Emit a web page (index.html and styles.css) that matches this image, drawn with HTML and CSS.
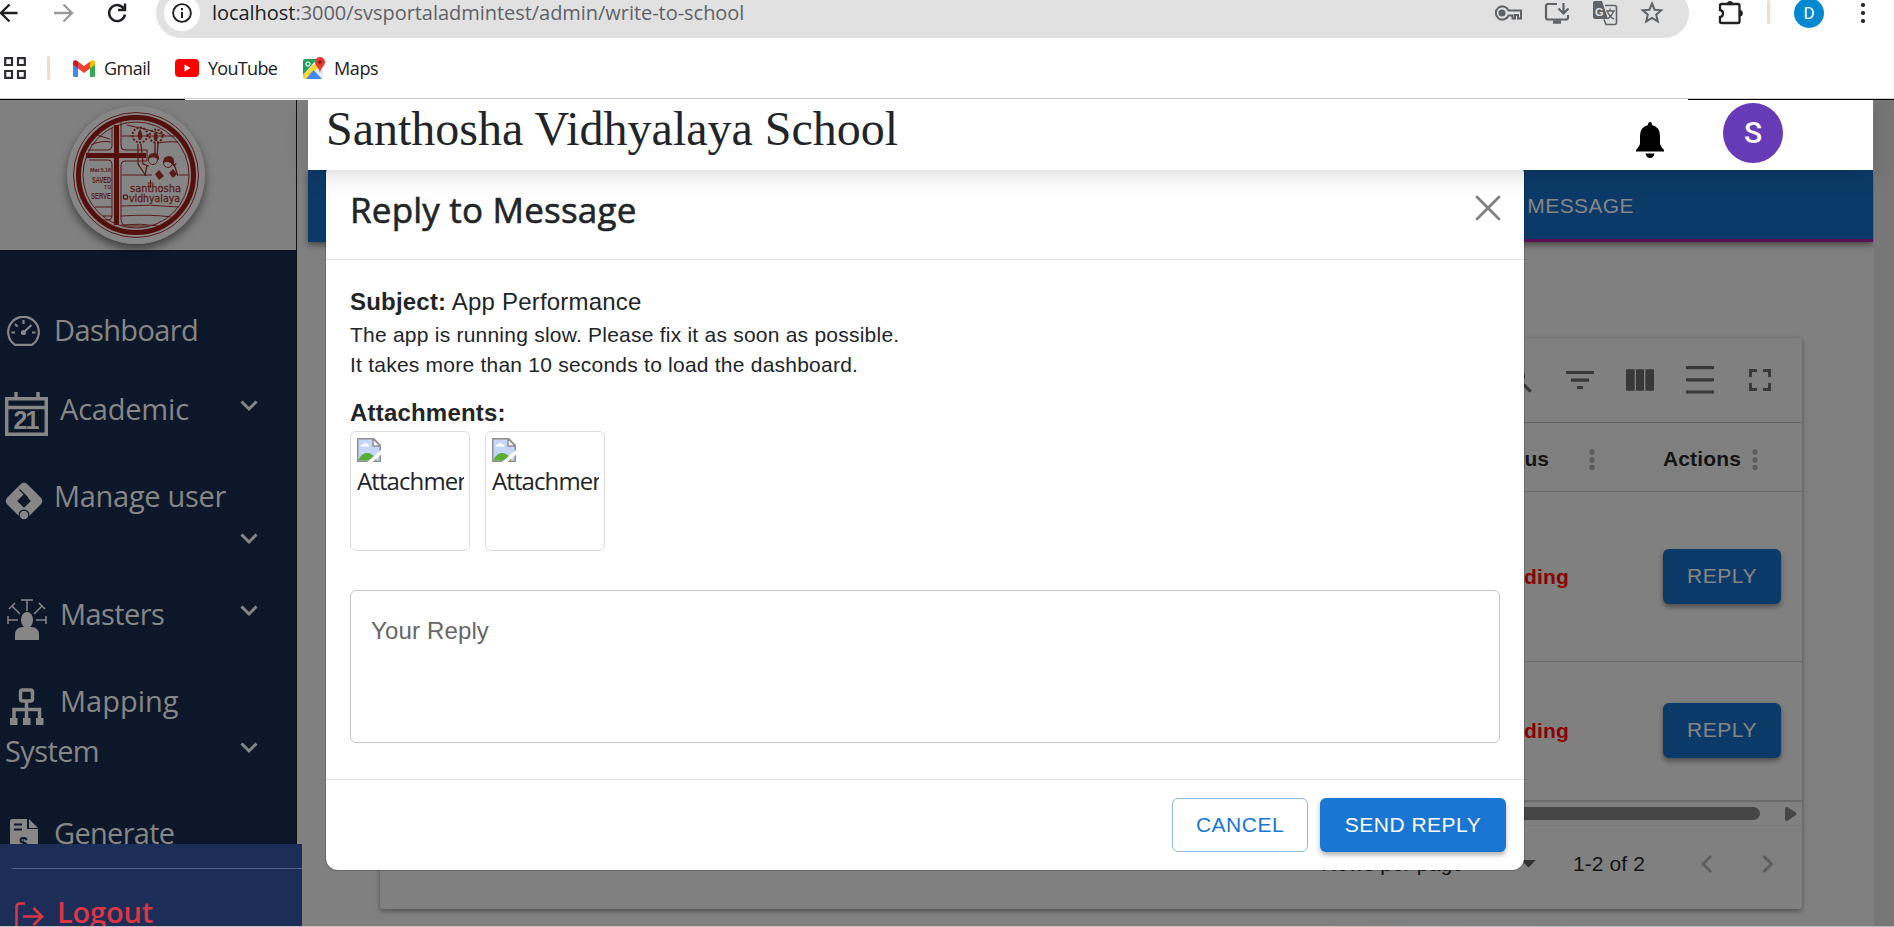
FILE: index.html
```html
<!DOCTYPE html>
<html lang="en">
<head>
<meta charset="utf-8">
<title>Santhosha Vidhyalaya School</title>
<link rel="stylesheet" href="styles.css">
</head>
<body>
<svg width="0" height="0" class="defs">
  <defs>
    <symbol id="chev" viewBox="0 0 18 12"><path d="M1.500 1.500 9 9l7.500-7.500" fill="none" stroke="#868686" stroke-width="3"/></symbol>
    <symbol id="broken" viewBox="0 0 24 24">
      <path d="M.75.75h16l6.500 6.500v16H.75z" fill="#c6d6f8" stroke="#8f8f8f" stroke-width="1.500"/>
      <path d="M3.500 8.500c0-2 2-2.300 2.700-2 .5-2.500 4-2.500 4.500 0 1.700 0 2 2 1 2z" fill="#fff"/>
      <path d="M1.500 22.500c3-10 14-10 18 0z" fill="#5aae38"/>
      <path d="M16 .75V8h7.250z" fill="#fff" stroke="#8f8f8f" stroke-width="1.500"/>
      <path d="M10 24 24 12v4.500L15.500 24z" fill="#fff"/>
    </symbol>
    <symbol id="kebab" viewBox="0 0 6 22"><g fill="#5c5c5c"><circle cx="3" cy="3" r="2.700"/><circle cx="3" cy="11" r="2.700"/><circle cx="3" cy="18.500" r="2.700"/></g></symbol>
  </defs>
</svg>

<header class="browser">
  <div class="toolbar">
    <svg class="back" width="18" height="22" viewBox="0 0 18 22"><path d="M17.500 11H1M9.500 2.500 1 11l8.500 8.500" fill="none" stroke="#202124" stroke-width="2.300"/></svg>
    <svg class="forward" width="20" height="22" viewBox="0 0 20 22"><path d="M0 11h17M9.500 2.500 18 11l-8.500 8.500" fill="none" stroke="#9a9a9a" stroke-width="2.300"/></svg>
    <svg class="reload" width="22" height="24" viewBox="0 0 22 24"><path d="M18.300 8.500A8 8 0 1 0 19 13.500M19 2.500V9h-7" fill="none" stroke="#202124" stroke-width="2.500"/></svg>
    <div class="omnibox">
      <span class="site-info"><svg width="20" height="20" viewBox="0 0 20 20"><circle cx="10" cy="10" r="8.900" fill="none" stroke="#202124" stroke-width="1.900"/><path d="M10 9v6M10 5v2.300" stroke="#202124" stroke-width="2"/></svg></span>
      <span class="url"><b>localhost</b>:3000/svsportaladmintest/admin/write-to-school</span>
      <span class="omni-icons">
        <svg width="28" height="26" viewBox="0 0 28 26" fill="none" stroke="#5f6368" stroke-width="2"><path d="M14.500 10.500H27v8h-3v-3.500h-3v3.500h-2.500V15.500h-4A6.600 6.600 0 1 1 14.500 10.500z"/><circle cx="8" cy="13" r="2.600" fill="#5f6368"/></svg>
        <svg width="26" height="26" viewBox="0 0 26 26" fill="none" stroke="#5f6368" stroke-width="2.200"><path d="M13 4H4Q2 4 2 6v11.500q0 2 2 2h18q2 0 2-2V15M19.500 3v10M14.500 8.500l5 5 5-5"/><path d="M9 22h8" stroke-width="3.500"/></svg>
        <svg width="26" height="26" viewBox="0 0 26 26"><path d="M2 1h8l6 18H3q-2 0-2-2V2z" fill="#5f6368"/><path d="M13 5.500h9.500q2 0 2 2v15q0 2-2 2H14l-2-5" fill="none" stroke="#5f6368" stroke-width="1.600"/><path d="M14 11h9M18 8.500V11M21.500 11c-1 4-4 6.500-6 8M15.500 12c1.500 3 4 6 6.500 7" fill="none" stroke="#5f6368" stroke-width="1.400"/><text x="3" y="16" class="glyph-g">G</text></svg>
        <svg width="24" height="26" viewBox="0 0 24 26"><path d="m12 3.500 2.600 6.200 6.700.6-5.100 4.400 1.600 6.600L12 17.800l-5.800 3.500 1.600-6.600-5.100-4.400 6.700-.6z" fill="none" stroke="#5f6368" stroke-width="2"/></svg>
      </span>
    </div>
    <svg class="puzzle" width="28" height="28" viewBox="0 0 28 28"><path d="M5.500 5H11.500M16.500 5h5.500q1.500 0 1.500 1.500v16q0 1.500-1.500 1.500h-16Q4 24 4 22.500V18c4-.5 4-6.500 0-7V6.500Q4 5 5.500 5z" fill="none" stroke="#202124" stroke-width="2.300"/><path d="M11 5a3 3 0 0 1 6 0zM23.500 11a3.300 3.300 0 0 1 0 6.600z" fill="#202124"/><path d="M11 5h6" stroke="#202124" stroke-width="2.300"/></svg>
    <i class="sep"></i>
    <span class="profile">D</span>
    <svg class="dots" width="6" height="22" viewBox="0 0 6 22"><circle cx="3" cy="3" r="2.100"/><circle cx="3" cy="11" r="2.100"/><circle cx="3" cy="19" r="2.100"/></svg>
  </div>
  <div class="bookmarks">
    <svg width="22" height="22" viewBox="0 0 22 22" fill="none" stroke="#2b2d30" stroke-width="2.200"><path d="M1.200 1.200h6.800v6.800H1.200zM14 1.200h6.800v6.800H14zM1.200 14h6.800v6.800H1.200zM14 14h6.800v6.800H14z"/></svg>
    <i class="sep"></i>
    <svg class="gmail" width="22" height="17" viewBox="0 0 22 17"><path d="M0 3v12.500Q0 17 1.500 17H5V6z" fill="#4285f4"/><path d="M22 3v12.500q0 1.500-1.500 1.500H17V6z" fill="#34a853"/><path d="M17 1.500 19 .3q3-.8 3 2.200v2L17 8.500z" fill="#fbbc04"/><path d="M5 1.500 3 .3q-3-.8-3 2.200v2l5 4z" fill="#c5221f"/><path d="M5 1.500 11 6l6-4.500v7L11 13 5 8.500z" fill="#ea4335"/></svg>
    <span class="bm bm-gmail">Gmail</span>
    <svg class="yt" width="24" height="18" viewBox="0 0 24 18"><rect width="24" height="18" rx="4" fill="#f00"/><path d="m9.500 5.500 6 3.500-6 3.500z" fill="#fff"/></svg>
    <span class="bm bm-yt">YouTube</span>
    <svg class="maps" width="22" height="23" viewBox="0 0 22 23"><rect y="2" width="20" height="20" rx="2" fill="#e8eaed"/><path d="M2 2h12L0 18V4q0-2 2-2z" fill="#1fa15d"/><path d="M0 18 14 4l3 5L3 22H2q-2 0-2-2z" fill="#fdd835"/><path d="m10.500 13 8.500 9H3z" fill="#4285f4"/><path d="M17 0a5 5 0 0 1 5 5c0 4-4 5-5 11-1-6-5-7-5-11a5 5 0 0 1 5-5z" fill="#e53b30"/><circle cx="17" cy="5" r="1.800" fill="#8c1a14"/><circle cx="5" cy="7" r="2" fill="none" stroke="#fff" stroke-width="1.100"/></svg>
    <span class="bm bm-maps">Maps</span>
  </div>
  <div class="edge"><i></i><i></i></div>
</header>

<div class="app">
  <aside class="sidebar">
    <div class="brand">
      <svg class="logo" width="138" height="138" viewBox="0 0 138 138">
        <circle cx="69" cy="69" r="69" fill="#868686"/>
        <circle cx="69" cy="69" r="62.500" fill="none" stroke="#5b1a17" stroke-width="1"/>
        <circle cx="69" cy="69" r="57.500" fill="#858585" stroke="#540f0c" stroke-width="5"/>
        <circle cx="69" cy="69" r="53" fill="none" stroke="#5b1a17" stroke-width="1"/>
        <g fill="none" stroke="#5b1a17" stroke-width="1">
          <path d="M45 22v18q0 4-4 4H21M45 58v52q0 4-4 4H36M22 54h19q4 0 4 4M54 15v25q0 4 4 4h22v11H58q-4 0-4 4v54q0 7 7 7h20"/>
          <path d="M55 30h54M24 39q10-5 20-3M26 28l17 5M55 69h30M54 100q30-2 58 1M54 110q30-2 50 1M54 119q20-2 38 1M28 101h17M36 110h9M60 19q20 4 38 10M112 69h10M90 37q12-2 21-1"/>
        </g>
        <path d="M47 19h5v100h-5zM19 47h60v5H19z" fill="#540f0c"/>
        <g fill="none" stroke="#5b1a17">
          <circle cx="73" cy="29" r="7.500" stroke-width="2" stroke-dasharray="2 1.500"/><circle cx="89" cy="30" r="6.500" stroke-width="2" stroke-dasharray="2 1.500"/>
          <path d="M71 38v20l8 12M74 38l2 20 6 2M88 37v12M91 37l-1 14M80 59l-2 11M107 58l4 12" stroke-width="1.300"/>
          <circle cx="86" cy="54" r="4.500"/><circle cx="101" cy="57" r="4.500"/>
        </g>
        <g fill="#5b1a17"><path d="M73 23q4 6 1 11h-2q-3-5 1-11zM89 25q3 5 1 10h-2q-3-5 1-10zM81 53q0-6 6-6t5 7q-5-5-11-1zM96 57q0-7 6-7t5 8l3-1-3 4q-4-7-11-4zM88 68l4-4 5 6-5 4zM102 67l4-4 4 5-4 4z"/></g>
        <g fill="#5b1a17">
          <text x="23" y="66" class="lg-sm" textLength="21">Mat 5.16</text>
          <text x="25" y="77" class="lg-md" textLength="19" lengthAdjust="spacingAndGlyphs">SAVED</text>
          <text x="37" y="83" class="lg-xs" textLength="7">TO</text>
          <text x="24" y="93" class="lg-md" textLength="20" lengthAdjust="spacingAndGlyphs">SERVE</text>
          <text x="63" y="86" class="lg-name" textLength="51" lengthAdjust="spacingAndGlyphs">santhosha</text>
          <text x="62" y="95.500" class="lg-name" textLength="51" lengthAdjust="spacingAndGlyphs">vidhyalaya</text>
        </g>
        <path d="M83.500 74v8M80.500 77h6" stroke="#5b1a17"/><circle cx="58.500" cy="91" r="2.200" fill="none" stroke="#5b1a17" stroke-width="1.300"/>
      </svg>
    </div>
    <nav class="nav">
      <div class="row dash">
        <svg width="33" height="31" viewBox="0 0 33 31" fill="none" stroke="#868686" stroke-width="2.200"><path d="M8 28.800h17a15.300 15.300 0 1 0-17 0z" stroke-linejoin="round"/><path d="M16.500 4v4M4.500 16.500h3.500M25 16.500h3.500M8 8l2.500 2.500M16 17l8.500-8"/><circle cx="16.500" cy="16.500" r="1.500" fill="#868686"/></svg>
        <span>Dashboard</span>
      </div>
      <div class="row acad">
        <svg width="43" height="44" viewBox="0 0 43 44"><path d="M1.700 6.700h39.600v35.600H1.700zM2 15.500h39M11 0v6M33 0v6" fill="none" stroke="#868686" stroke-width="3.500"/><text x="8.500" y="37" class="cal" textLength="26">21</text></svg>
        <span>Academic</span><svg class="chev" width="18" height="12"><use href="#chev"/></svg>
      </div>
      <div class="row manage">
        <svg width="38" height="38" viewBox="0 0 38 38"><path d="M19 5.500 5.500 19 19 32.500 32.500 19z" fill="none" stroke="#868686" stroke-width="9.500" stroke-linejoin="round"/><path d="m14.500 7.500 8.500 8.500" stroke="#0c172a" stroke-width="1.200"/><circle cx="19" cy="33" r="4.900" fill="#868686" stroke="#0c172a" stroke-width="1.200"/></svg>
        <span>Manage user</span>
      </div>
      <div class="row manage2"><svg class="chev" width="18" height="12"><use href="#chev"/></svg></div>
      <div class="row masters">
        <svg width="40" height="42" viewBox="0 0 40 42"><g fill="none" stroke="#868686" stroke-width="1.500"><path d="M20 1v11M14 1h12M1 17v8M1 21h10M39 17v8M39 21H29M2 10l6-6M5 7l8 8M32 4l6 6M35 7l-8 8"/></g><ellipse cx="20" cy="21" rx="6" ry="8" fill="#868686"/><path d="M8 41V36q0-8 8-8h8q8 0 8 8v5z" fill="#868686"/></svg>
        <span>Masters</span><svg class="chev" width="18" height="12"><use href="#chev"/></svg>
      </div>
      <div class="row mapping">
        <svg width="34" height="37" viewBox="0 0 34 37"><path d="M12.500 2h8q2 0 2 2v7q0 2-2 2h-8q-2 0-2-2V4q0-2 2-2zM16.500 13v17M4 31V21.500h25.500V31" fill="none" stroke="#868686" stroke-width="3.500"/><path d="M0 30h7.500v7H0zM13 30h7.500v7H13zM26 30h7.500v7H26z" fill="#868686"/></svg>
        <span>Mapping</span>
      </div>
      <div class="row system"><span>System</span><svg class="chev" width="18" height="12"><use href="#chev"/></svg></div>
      <div class="row generate">
        <svg width="28" height="36" viewBox="0 0 28 36"><path d="M2 0h15v10h11v26H0V2q0-2 2-2z" fill="#868686"/><path d="m19 0 9 9h-9z" fill="#868686"/><path d="M4 5.500h8M4 10.500h8" stroke="#0c172a" stroke-width="2"/><text x="9" y="30" class="usd">$</text></svg>
        <span>Generate</span>
      </div>
    </nav>
    <div class="logout">
      <hr>
      <div class="logout-row"><svg width="30" height="25" viewBox="0 0 30 25" fill="none" stroke="#dc3545" stroke-width="2.600"><path d="M10 1.500H5Q1.500 1.500 1.500 5v20M8 14.500h18M18.500 6l8.500 8.500-8.500 8.500"/></svg><span>Logout</span></div>
    </div>
  </aside>

  <main class="content">
    <div class="tabs"><span>MESSAGE</span></div>
    <section class="card">
      <div class="tools">
        <svg width="36" height="36" viewBox="0 0 24 24"><path d="M15.500 14h-.8l-.3-.3A6.500 6.500 0 1 0 13.700 14.400l.3.300v.8l5 5 1.500-1.500zM9.500 14a4.500 4.500 0 1 1 0-9 4.500 4.500 0 0 1 0 9z"/></svg>
        <svg width="28" height="28" viewBox="0 0 28 28"><path d="M0 5h28v3H0zM5 12.500h18v3.200H5zM11 20h6v3h-6z"/></svg>
        <svg width="28" height="28" viewBox="0 0 28 28"><path d="M0 3.300h8.700v21.500H0zM10 3.300h8v21.500h-8zM19.400 3.300H28v21.500h-8.600z"/></svg>
        <svg width="28" height="28" viewBox="0 0 28 28"><path d="M0 0h28v3.200H0zM0 12.200h28v3.200H0zM0 24.400h28v3.200H0z"/></svg>
        <svg width="28" height="28" viewBox="0 0 28 28"><path d="M3 3h8v3H6v5H3zM17 3h8v8h-3V6h-5zM3 17h3v5h5v3H3zM22 17h3v8h-8v-3h5z"/></svg>
      </div>
      <div class="thead"><b class="c-status">Status</b><svg width="6" height="22"><use href="#kebab"/></svg><b class="c-act">Actions</b><svg width="6" height="22"><use href="#kebab"/></svg></div>
      <div class="trow first"><b>Pending</b><span class="btn">REPLY</span></div>
      <div class="trow second"><b>Pending</b><span class="btn">REPLY</span></div>
      <div class="hscroll"><i></i><svg width="12" height="14" viewBox="0 0 12 14"><path d="M0 2Q0 0 2 0l9 5.500q1 1.500 0 2.500l-9 6Q0 14 0 12z" fill="#464646"/></svg></div>
      <div class="pager">
        <span class="rpp">Rows per page</span>
        <svg class="caret" width="15" height="8" viewBox="0 0 15 8"><path d="M0 0h15L7.500 7.500z" fill="#333"/></svg>
        <span>1-2 of 2</span>
        <svg class="prev" width="12" height="18" viewBox="0 0 12 18"><path d="M10 1 2 9l8 8" fill="none" stroke="#5c5c5c" stroke-width="2.600"/></svg>
        <svg width="12" height="18" viewBox="0 0 12 18"><path d="m1.500 1 8 8-8 8" fill="none" stroke="#5c5c5c" stroke-width="2.600"/></svg>
      </div>
    </section>
  </main>
  <i class="gutter"></i>

  <section class="modal">
    <div class="modal-head"><h2>Reply to Message</h2><svg width="26" height="26" viewBox="0 0 26 26"><path d="m2 2 22 22M24 2 2 24" stroke="#7f7f7f" stroke-width="2.800" stroke-linecap="round"/></svg></div>
    <div class="modal-body">
      <p class="subject"><b>Subject:</b> App Performance</p>
      <p class="msg">The app is running slow. Please fix it as soon as possible.<br>It takes more than 10 seconds to load the dashboard.</p>
      <p class="att-title">Attachments:</p>
      <div class="atts">
        <div class="att"><div><svg width="24" height="24"><use href="#broken"/></svg><span>Attachment</span></div></div>
        <div class="att"><div><svg width="24" height="24"><use href="#broken"/></svg><span>Attachment</span></div></div>
      </div>
      <div class="reply">Your Reply</div>
    </div>
    <div class="modal-foot"><span class="cancel">CANCEL</span><span class="send">SEND REPLY</span></div>
  </section>

  <header class="topbar">
    <h1>Santhosha Vidhyalaya School</h1>
    <svg class="bell" width="28" height="36" viewBox="0 0 28 36"><path d="M14 0q2 0 2 3 8 2 8 11v7q0 3 4 7v1.500H0V28q4-4 4-7v-7Q4 5 12 3q0-3 2-3zM9.500 31.500h9q-1 4.500-4.500 4.500t-4.500-4.500z"/></svg>
    <span class="avatar">S</span>
  </header>
</div>
<div class="bottom-edge"></div>
</body>
</html>
```
FILE: styles.css
```css
* { box-sizing: border-box; }
body { margin: 0; width: 1894px; height: 927px; overflow: hidden; background: #fff; font-family: "Liberation Sans", Arial, sans-serif; color: #212529; }
svg { display: block; flex: none; }
h1, h2, p { margin: 0; font-weight: 400; }
.defs { position: absolute; }

/* browser chrome */
.browser { height: 100px; font-family: "Open Sans", "Noto Sans", sans-serif; overflow: hidden; display: flex; flex-direction: column; }
.toolbar { height: 38px; flex: none; display: flex; align-items: flex-start; }
.back { margin-top: 2px; }
.forward { margin: 2px 0 0 36px; }
.reload { margin: 1px 0 0 32px; }
.omnibox { margin-left: 28px; margin-top: -12px; width: 1533px; height: 50px; border-radius: 25px; background: #e1e1e1; display: flex; align-items: center; padding-left: 8px; }
.site-info { width: 36px; height: 36px; border-radius: 50%; background: #fff; display: flex; align-items: center; justify-content: center; }
.url { margin-left: 12px; font-size: 20px; letter-spacing: -.04px; color: #5f6368; white-space: nowrap; line-height: 28px; }
.url b { font-weight: 400; color: #202124; }
.omni-icons { margin-left: auto; display: flex; gap: 22px; padding-right: 25px; }
.glyph-g { font: bold 11px "Liberation Sans", sans-serif; fill: #e1e1e1; }
.puzzle { margin: -1px 0 0 27px; }
.sep { width: 3px; height: 24px; border-radius: 2px; background: #fbd9c6; }
.toolbar .sep { margin-left: 23px; }
.profile { margin: -2px 0 0 24px; width: 30px; height: 30px; border-radius: 50%; background: #0288d1; color: #fff; text-align: center; font: 17px/30px Roboto, sans-serif; }
.dots { margin: 2px 0 0 36px; fill: #202124; }
.bookmarks { height: 60px; flex: none; display: flex; align-items: center; padding: 0 0 0 4px; }
.bookmarks .sep { margin-left: 21px; }
.gmail { margin-left: 23px; }
.bm { font-size: 18px; line-height: 24px; color: #202124; white-space: nowrap; margin-top: -1px; }
.bm-gmail { margin-left: 9px; width: 47px; letter-spacing: -.5px; }
.yt { margin-left: 24px; }
.bm-yt { margin-left: 9px; width: 70px; letter-spacing: -.7px; }
.maps { margin-left: 25px; }
.bm-maps { margin-left: 9px; letter-spacing: -.4px; }
.edge { height: 2px; border-top: 1px solid #ccc; display: flex; justify-content: space-between; }
.edge i { height: 1px; width: 185px; background: #000; }
.edge i + i { width: 206px; }

/* application shell */
.app { position: relative; height: 826px; display: flex; background: #808080; overflow: hidden; }
.sidebar { width: 297px; position: relative; background: #0c172a; border-right: 1px solid #111; display: flex; flex-direction: column; }
.brand { height: 150px; flex: none; background: #808080; padding: 6px 0 0 67px; }
.logo { border-radius: 50%; box-shadow: 0 5px 10px rgba(0,0,0,.5); }
.lg-sm { font: bold 5.500px "Liberation Sans", sans-serif; }
.lg-xs { font: bold 4.500px "Liberation Sans", sans-serif; }
.lg-md { font: bold 9px "Liberation Sans", sans-serif; }
.lg-name { font: 11px "DejaVu Sans", sans-serif; stroke: #5b1a17; stroke-width: .3px; }
.nav { padding-top: 55px; font: 29px/50px "Open Sans", "Noto Sans", sans-serif; color: #868686; letter-spacing: -.4px; }
.row { height: 50px; display: flex; align-items: flex-start; padding-left: 5px; padding-right: 38px; white-space: nowrap; }
.chev { margin: 16px 0 0 auto; }
.dash { margin-bottom: 29px; letter-spacing: -.6px; }
.dash svg { margin: 11px 14px 0 2px; }
.acad { margin-bottom: 37px; letter-spacing: -.2px; }
.acad svg:first-child { margin: 8px 12px 0 0; }
.manage { letter-spacing: -.3px; }
.manage svg { margin: 11px 11px 0 0; }
.manage2 { margin-bottom: 18px; }
.manage2 .chev { margin-top: 12px; }
.masters { margin-bottom: 37px; letter-spacing: -.6px; }
.masters svg:first-child { margin: 10px 13px 0 2px; }
.mapping { letter-spacing: 0; }
.mapping svg { margin: 12px 16px 0 5px; }
.system { margin-bottom: 32px; letter-spacing: -.6px; }
.generate { letter-spacing: -.7px; }
.generate svg { margin: 11px 16px 0 5px; }
.cal { font: bold 25px "Liberation Sans", sans-serif; fill: #868686; letter-spacing: 0; }
.usd { font: bold 16px "Liberation Sans", sans-serif; fill: #0c172a; letter-spacing: 0; }
.logout { position: absolute; left: 0; top: 744px; width: 302px; height: 82px; background: #1c2e58; z-index: 2; overflow: hidden; }
.logout hr { border: 0; height: 1px; background: #55628a; margin: 24px 0 0 12px; }
.logout-row { display: flex; padding: 18px 0 0 15px; color: #dc3545; font: 600 29px/50px "Open Sans", sans-serif; letter-spacing: -.2px; }
.logout-row svg { margin: 15px 12px 0 0; }

.content { width: 1577px; padding: 70px 1px 0 11px; }
.tabs { height: 72px; background: linear-gradient(90deg, #0c3a68 20%, #581254 20%) bottom / 100% 3px no-repeat #0c3a68; box-shadow: 0 3px 6px rgba(0,0,0,.45); padding: 23px 239px 0 0; text-align: right; font-size: 21px; line-height: 26px; letter-spacing: .4px; color: #868686; }
.card { width: 1422px; height: 571px; margin: 96px 0 0 72px; background: #808080; box-shadow: 0 2px 5px rgba(0,0,0,.4); border-radius: 3px; }
.tools { height: 85px; border-bottom: 1px solid #636363; display: flex; justify-content: flex-end; align-items: center; gap: 32px; padding: 0 28px 0 0; fill: #383838; }
.tools svg:first-child { margin-right: -3px; }
.thead { height: 69px; border-bottom: 1px solid #6b6b6b; display: flex; align-items: center; justify-content: flex-end; font-size: 21px; line-height: 30px; color: #141414; padding-right: 44px; padding-top: 6px; }
.thead b { margin-top: -3px; }
.c-status + svg { margin-left: 40px; }
.c-act { margin-left: 68px; margin-right: 11px; letter-spacing: .15px; }
.trow { height: 170px; border-bottom: 1px solid #6b6b6b; display: flex; justify-content: flex-end; align-items: flex-start; padding: 57px 21px 0 0; color: #8b0000; font-size: 21px; line-height: 55px; }
.trow b { margin-right: 94px; letter-spacing: .15px; }
.trow.second { height: 140px; padding-top: 41px; border-bottom: 2px solid #6b6b6b; }
.btn { width: 118px; height: 55px; border-radius: 6px; background: #0c3a68; color: #868686; text-align: center; line-height: 53px; letter-spacing: .5px; box-shadow: 0 3px 5px rgba(0,0,0,.4); }
.hscroll { height: 24px; display: flex; align-items: center; justify-content: flex-end; border-bottom: 1px solid #7a7a7a; padding-right: 5px; }
.hscroll i { width: 1200px; height: 13px; border-radius: 7px; background: #464646; margin-right: 25px; }
.pager { display: flex; align-items: center; justify-content: flex-end; height: 76px; font-size: 21px; line-height: 30px; color: #141414; padding-right: 28px; letter-spacing: .1px; }
.rpp { margin-right: 57px; }
.caret { margin-right: 37px; }
.prev { margin: 0 49px 0 56px; }
.gutter { width: 20px; background: #777; }

.topbar { position: absolute; left: 308px; top: 0; width: 1565px; height: 70px; background: #fff; display: flex; padding-left: 18px; box-shadow: 0 5px 22px rgba(0,0,0,.14); z-index: 4; }
.topbar h1 { font: 48px/58px "Liberation Serif", "Times New Roman", serif; width: 1001px; }
.bell { margin: 22px 0 0 309px; }
.avatar { margin: 3px 0 0 59px; width: 60px; height: 60px; border-radius: 50%; background: #673ab7; color: #fff; text-align: center; font: 500 30px/60px Roboto, sans-serif; }

/* reply dialog */
.modal { position: absolute; left: 326px; top: 62px; width: 1198px; height: 708px; background: #fff; border-radius: 12px; z-index: 3; box-shadow: 0 0 0 1px rgba(0,0,0,.18); display: flex; flex-direction: column; }
.modal-head { height: 98px; flex: none; border-bottom: 1px solid #dee2e6; display: flex; justify-content: space-between; padding: 23px 23px 0 24px; }
.modal-head h2 { font: 500 35px/50px "Open Sans", "Noto Sans", sans-serif; letter-spacing: .2px; -webkit-text-stroke: .6px #212529; }
.modal-head svg { margin-top: 10px; }
.modal-body { flex: 1; padding: 24px 24px 0; }
.subject { font-size: 24px; line-height: 36px; letter-spacing: .2px; }
.msg { font-size: 21px; line-height: 30px; letter-spacing: .23px; }
.att-title { font-size: 24px; line-height: 36px; font-weight: 700; margin-top: 15px; letter-spacing: .2px; }
.atts { display: flex; gap: 15px; }
.att { width: 120px; height: 120px; border: 1px solid #dcdcdc; border-radius: 6px; padding: 6px; }
.att div { width: 107px; overflow: hidden; font: 24px/38px "Open Sans", sans-serif; white-space: nowrap; letter-spacing: -.9px; }
.reply { margin-top: 39px; height: 153px; border: 1px solid #c4c4c4; border-radius: 6px; padding: 22px 20px; font-size: 24px; line-height: 36px; letter-spacing: .15px; color: #666; }
.modal-foot { height: 91px; flex: none; border-top: 1px solid #dee2e6; display: flex; justify-content: flex-end; gap: 12px; padding: 18px 18px 0 0; font-size: 21px; letter-spacing: .5px; }
.cancel, .send { height: 54px; border-radius: 6px; text-align: center; line-height: 53px; }
.cancel { width: 136px; border: 1px solid #8cbaea; color: #1976d2; line-height: 51px; }
.send { width: 186px; background: #1976d2; color: #fff; box-shadow: 0 3px 5px rgba(0,0,0,.3); }
.bottom-edge { height: 1px; background: linear-gradient(90deg, #c9beb8 0 70%, #a9bcc6 85%); }
```
